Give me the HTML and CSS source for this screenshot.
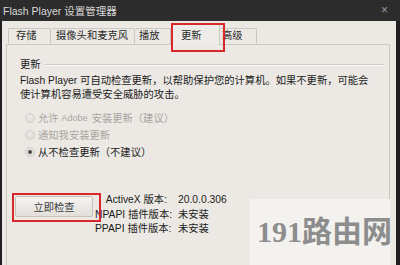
FILE: index.html
```html
<!DOCTYPE html>
<html lang="zh">
<head>
<meta charset="utf-8">
<title>Flash Player 设置管理器</title>
<link rel="stylesheet" href="styles.css">
</head>
<body>
<div class="app">
  <div class="titlebar">
    <span class="title">Flash Player 设置管理器</span>
    <span class="close">×</span>
  </div>
  <div class="frame">
    <div class="tabs">
      <div class="tab t1">存储</div>
      <div class="tab t2">摄像头和麦克风</div>
      <div class="tab t3">播放</div>
      <div class="tab active">更新</div>
      <div class="tab t5">高级</div>
    </div>
    <div class="panel">
      <div class="group-head"><span>更新</span><span class="rule"></span></div>
      <p class="desc">Flash Player 可自动检查更新，以帮助保护您的计算机。如果不更新，可能会<br>使计算机容易遭受安全威胁的攻击。</p>
      <ul class="radios">
        <li class="disabled"><span class="radio"></span>允许<span class="small">Adobe</span>安装更新（建议）</li>
        <li class="disabled"><span class="radio"></span>通知我安装更新</li>
        <li><span class="radio checked"></span>从不检查更新（不建议）</li>
      </ul>
      <div class="bottom">
        <div class="btn-wrap"><button class="btn">立即检查</button></div>
        <div class="versions">
          <span class="lbl">ActiveX 版本:</span><span class="val">20.0.0.306</span>
          <span class="lbl">NPAPI 插件版本:</span><span class="val">未安装</span>
          <span class="lbl">PPAPI 插件版本:</span><span class="val">未安装</span>
        </div>
      </div>
    </div>
  </div>
  <div class="watermark">191路由网</div>
</div>
</body>
</html>
```

FILE: styles.css
```css
* { box-sizing: border-box; }
html, body { margin: 0; padding: 0; }
body {
  width: 400px;
  height: 265px;
  overflow: hidden;
  background: #1f1f1f;
  font-family: "Liberation Sans", "Noto Sans CJK SC", sans-serif;
  font-size: 10.3px;
  color: #1b1b1b;
}
.app {
  position: relative;
  height: 265px;
  display: flex;
  flex-direction: column;
}
.titlebar {
  height: 21px;
  flex: none;
  background: #2c2c2c;
  display: flex;
  align-items: center;
  justify-content: space-between;
  padding: 0 12px 1px 3px;
  color: #dadada;
  font-size: 10.5px;
}
.close { color: #9a9a9a; font-size: 12px; }
.frame {
  flex: 1;
  margin: 0 4px 0 2px;
  background: #ece9e4;
  padding-top: 1px;
  display: flex;
  flex-direction: column;
}
.tabs {
  display: flex;
  align-items: flex-end;
  height: 22px;
  padding-left: 6px;
  flex: none;
}
.tab {
  height: 16px;
  border: 1px solid #cbc8c1;
  border-bottom: none;
  border-radius: 2px 2px 0 0;
  line-height: 14px;
  white-space: nowrap;
  background: #ece9e4;
  color: #2a2a2a;
}
.t1 { width: 43px; padding-left: 7px; }
.t2 { width: 84px; padding-left: 5px; border-left: none; }
.t3 { width: 36px; padding-left: 4px; border-left: none; }
.t5 { width: 37px; padding-left: 2px; border-left: none; }
.tab.active {
  position: relative;
  z-index: 1;
  width: 49px;
  height: 22px;
  margin-bottom: -1px;
  padding: 4px 0 0 10px;
  line-height: 16px;
  background: #eeece8;
  border-left: none;
}
.tab.active::after {
  content: "";
  position: absolute;
  left: 0;
  top: -1px;
  width: 50px;
  height: 25px;
  border: 2px solid #d8262b;
}
.panel {
  flex: 1;
  margin-left: 4px;
  width: 384px;
  border: 1px solid #cbc8c1;
  border-bottom: none;
  padding: 12px 5px 0 13px;
}
.group-head {
  display: flex;
  align-items: center;
  height: 13px;
}
.rule {
  flex: 1;
  margin-left: 3px;
  margin-top: 2px;
  border-top: 1px solid #cfccc5;
  border-bottom: 1px solid #fbfaf8;
}
.desc {
  margin: 4px 0 0;
  line-height: 14px;
  white-space: nowrap;
}
.radios {
  list-style: none;
  margin: 7px 0 0 5px;
  padding: 0;
}
.radios li {
  display: flex;
  align-items: center;
  height: 17px;
  white-space: nowrap;
}
.radios li.disabled { color: #a8a59f; }
.small { font-size: 9px; margin: 0 4px 0 3px; }
.radio {
  width: 10px;
  height: 10px;
  border-radius: 50%;
  margin-right: 3px;
  background: radial-gradient(circle at 50% 40%, #eeece9, #d9d6d1);
  border: 1px solid #d2cfc9;
  display: flex;
  align-items: center;
  justify-content: center;
}
.radio.checked::before {
  content: "";
  width: 4px;
  height: 4px;
  border-radius: 50%;
  background: #4a4a4a;
}
.bottom {
  display: flex;
  align-items: flex-start;
  margin: 33px 0 0 -5px;
}
.btn-wrap {
  position: relative;
  margin-top: 3px;
}
.btn-wrap::after {
  content: "";
  position: absolute;
  left: -3px;
  top: -3px;
  width: 85px;
  height: 25px;
  border: 2px solid #d8262b;
}
.btn {
  display: block;
  width: 78px;
  height: 21px;
  border: 1px solid #c4c1ba;
  border-radius: 2px;
  background: linear-gradient(#f5f4f1, #e3e0db);
  font: inherit;
  color: #3a3a3a;
  padding: 0;
}
.versions {
  display: grid;
  grid-template-columns: 72px auto;
  column-gap: 11px;
  line-height: 14.5px;
  margin-left: 2px;
  white-space: nowrap;
}
.lbl { text-align: right; }
.watermark {
  position: absolute;
  left: 250px;
  top: 199px;
  width: 140px;
  height: 66px;
  background: #f3f2ef;
  padding: 14px 0 0 7px;
  font-family: "Liberation Serif", "Noto Sans CJK SC", serif;
  font-weight: bold;
  font-size: 30px;
  line-height: 38px;
  color: #8d8d8d;
  white-space: nowrap;
}
```
